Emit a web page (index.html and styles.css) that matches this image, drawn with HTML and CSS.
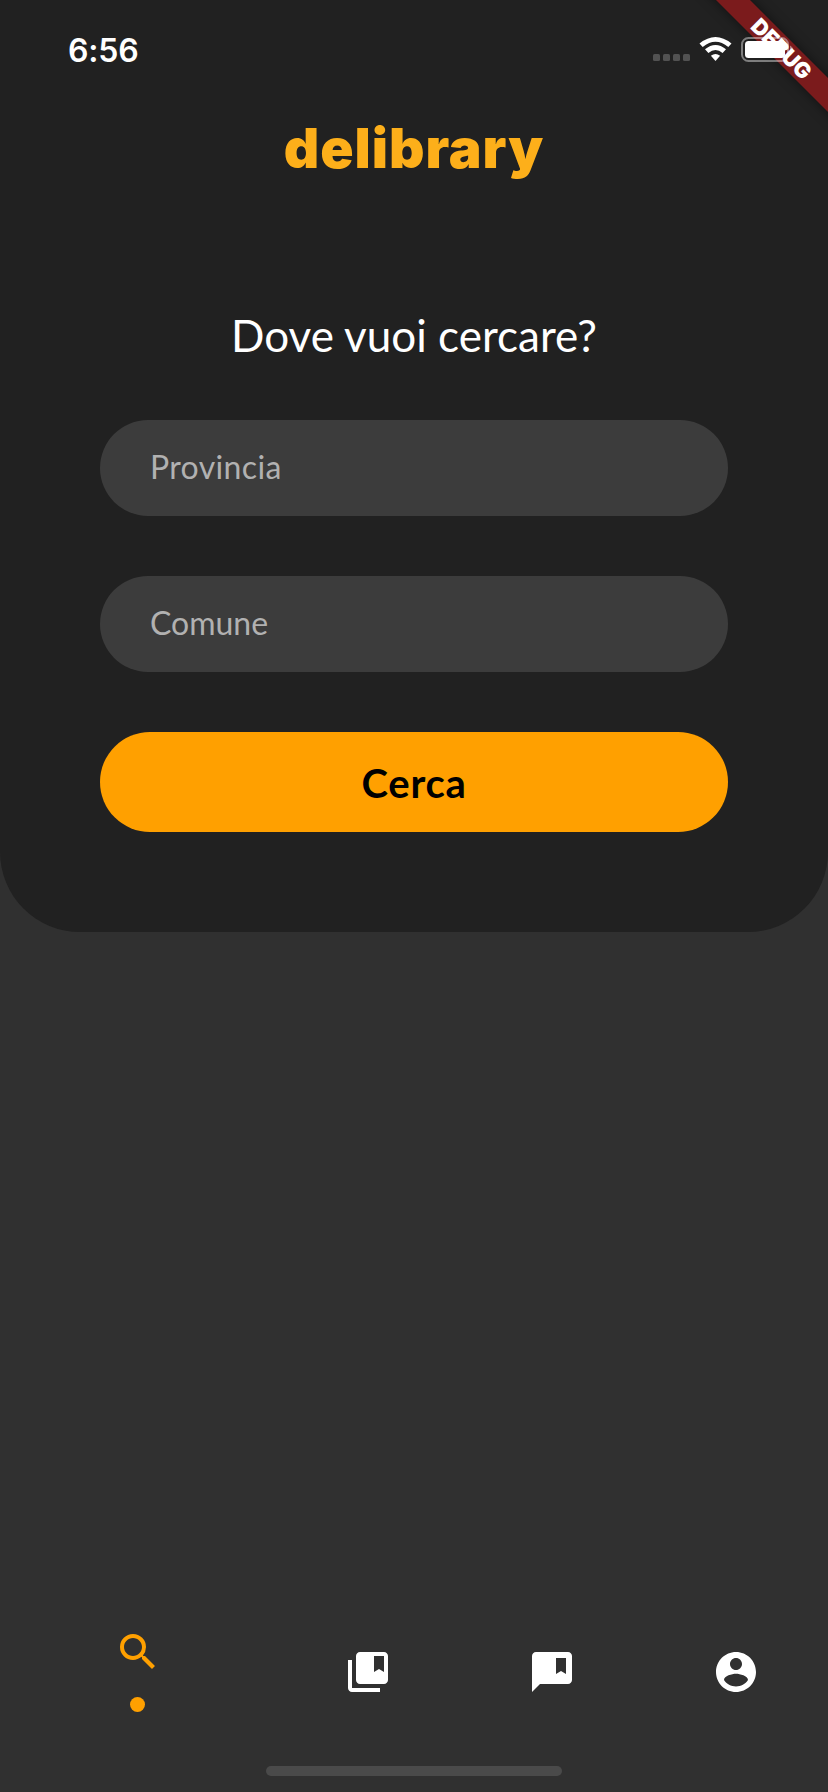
FILE: index.html
```html
<!DOCTYPE html>
<html lang="it">
<head>
<meta charset="utf-8">
<title>delibrary</title>
<link rel="stylesheet" href="styles.css">
</head>
<body>
<div class="app">
  <main class="panel">
    <header class="status">
      <span class="time">6:56</span>
      <svg class="indicators" width="142" height="26" viewBox="0 0 142 26">
        <g fill="#525252"><rect x="0" y="18" width="7" height="7" rx="1.5"/><rect x="10" y="18" width="7" height="7" rx="1.5"/><rect x="20" y="18" width="7" height="7" rx="1.5"/><rect x="30" y="18" width="7" height="7" rx="1.5"/></g>
        <g fill="#fff">
          <path d="M46.5 7.500 Q62.500 -5.500 78.500 7.500 L75.300 11 Q62.500 .6 49.700 11Z"/>
          <path d="M52 13.300 Q62.500 4.500 73 13.300 L69.600 17 Q62.500 11.200 55.400 17Z"/>
          <path d="M57.900 19.800 Q62.500 16 67.100 19.800 L62.500 25Z"/>
        </g>
      </svg>
    </header>
    <h1 class="logo">delibrary</h1>
    <h2 class="question">Dove vuoi cercare?</h2>
    <form class="form">
      <div class="field province">Provincia</div>
      <div class="field">Comune</div>
      <button class="submit" type="button">Cerca</button>
    </form>
  </main>
  <nav class="nav">
    <div class="tab active">
      <svg width="48" height="48" viewBox="0 0 24 24" fill="currentColor"><path d="M15.5 14h-.79l-.28-.27A6.471 6.471 0 0 0 16 9.5 6.5 6.5 0 1 0 9.5 16c1.61 0 3.09-.59 4.23-1.57l.27.28v.79l5 4.99L20.49 19l-4.99-5zm-6 0C7.01 14 5 11.99 5 9.5S7.01 5 9.5 5 14 7.01 14 9.5 11.99 14 9.5 14z"/></svg>
      <span class="dot"></span>
    </div>
    <div class="tab books"><svg width="48" height="48" viewBox="0 0 24 24" fill="currentColor"><path d="M4 6H2v14c0 1.100.9 2 2 2h14v-2H4V6z"/><path d="M20 2H8c-1.100 0-2 .9-2 2v12c0 1.100.9 2 2 2h12c1.100 0 2-.9 2-2V4c0-1.100-.9-2-2-2zm0 10l-2.500-1.500L15 12V4h5v8z"/></svg></div>
    <div class="tab chat"><svg width="48" height="48" viewBox="0 0 24 24" fill="currentColor"><path d="M20 2H4c-1.100 0-2 .9-2 2v18l4-4h14c1.100 0 2-.9 2-2V4c0-1.100-.9-2-2-2zm-1 11l-2.500-1.500L14 13V5h5v8z"/></svg></div>
    <div class="tab account"><svg width="48" height="48" viewBox="0 0 24 24" fill="currentColor"><path d="M12 2C6.480 2 2 6.480 2 12s4.480 10 10 10 10-4.480 10-10S17.520 2 12 2zm0 3c1.660 0 3 1.340 3 3s-1.340 3-3 3-3-1.340-3-3 1.340-3 3-3zm0 14.200c-2.500 0-4.710-1.280-6-3.220.03-1.990 4-3.080 6-3.080 1.990 0 5.970 1.090 6 3.080-1.290 1.940-3.500 3.220-6 3.220z"/></svg></div>
  </nav>
  <div class="home-indicator"></div>
  <div class="ribbon"><span>DEBUG</span></div>
  <svg class="battery" width="52" height="26" viewBox="0 0 52 26"><rect x="1" y="1" width="46" height="23" rx="6.500" fill="none" stroke="#fff" stroke-opacity=".42" stroke-width="2"/><rect x="4" y="4" width="40" height="17" rx="3.500" fill="#fff"/><path d="M49 8.500q3 1.500 3 4t-3 4z" fill="#fff" fill-opacity=".45"/></svg>
</div>
</body>
</html>
```
FILE: styles.css
```css
* { box-sizing: border-box; }
body { margin: 0; background: #303030; font-family: Lato, sans-serif; }
.app { position: relative; width: 828px; height: 1792px; overflow: hidden; display: flex; flex-direction: column; background: #303030; color: #fff; }
.panel { height: 932px; background: #212121; border-radius: 0 0 80px 80px; display: flex; flex-direction: column; align-items: center; }
.status { width: 100%; height: 88px; flex: none; display: flex; align-items: flex-start; justify-content: space-between; padding: 36px 33px 0 68px; }
.time { font: 600 32px/29px Inter, sans-serif; letter-spacing: -.2px; }
.logo { margin: 20px 0 0; height: 80px; font: 900 55px/80px Inter, sans-serif; letter-spacing: .95px; color: #fdaf1a; }
.question { margin: 111px 0 0; height: 72px; font: 400 44px/72px Lato, sans-serif; }
.form { width: 628px; margin-top: 49px; display: flex; flex-direction: column; gap: 60px; }
.field { height: 96px; padding-left: 50px; border-radius: 48px; background: #3c3c3c; color: #b1b1b1; font-size: 32px; line-height: 94px; }
.province { letter-spacing: .35px; }
.submit { height: 100px; padding: 2px 0 0; border: 0; border-radius: 50px; background: #ffa000; color: #000; font: 700 40px/96px Lato, sans-serif; letter-spacing: .7px; }
.nav { margin-top: 696px; height: 100px; display: flex; align-items: flex-start; padding-left: 114px; }
.tab { height: 48px; margin-top: 20px; }
.tab svg { display: block; }
.active { margin-top: 0; height: 84px; color: #ffa000; display: flex; flex-direction: column; align-items: center; justify-content: space-between; }
.dot { width: 15px; height: 15px; margin-right: 1px; border-radius: 50%; background: currentColor; }
.books { margin-left: 182px; }
.chat, .account { margin-left: 136px; }
.home-indicator { width: 296px; height: 10px; margin: 38px auto 0; border-radius: 5px; background: #4a4a4a; }
.ribbon { position: absolute; left: 680.500px; top: 35.500px; width: 200px; height: 24px; transform: rotate(45deg); background: #7b1b1c; box-shadow: 0 0 12px rgba(0, 0, 0, .5); text-align: center; }
.ribbon span { display: block; padding-left: 2px; font: 900 21.600px/24px Inter, sans-serif; }
.battery { position: absolute; left: 741px; top: 37px; }
```
